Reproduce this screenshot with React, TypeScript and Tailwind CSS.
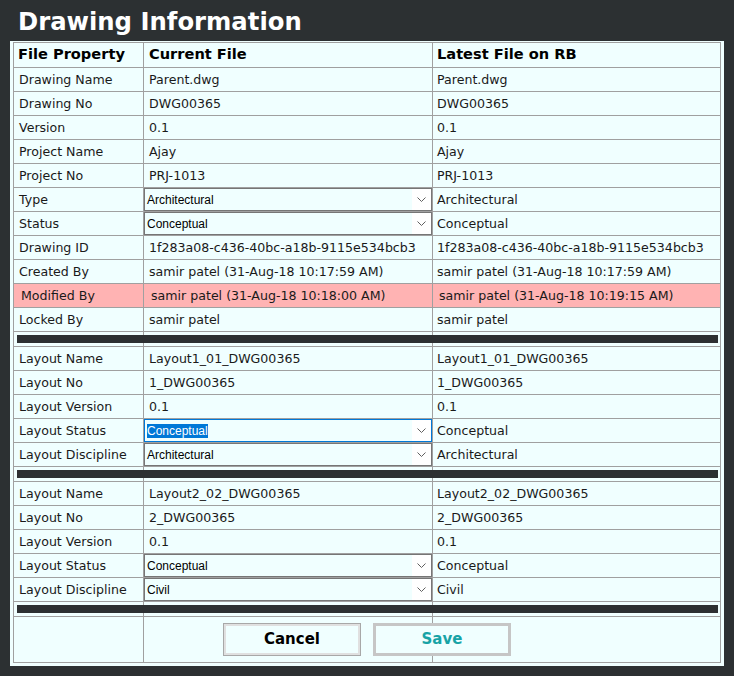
import React from 'react';

type RowData = {
  label: string;
  current: string;
  latest: string;
  select?: boolean;
  focused?: boolean;
  highlight?: boolean;
};

const drawingRows: RowData[] = [
  { label: 'Drawing Name', current: 'Parent.dwg', latest: 'Parent.dwg' },
  { label: 'Drawing No', current: 'DWG00365', latest: 'DWG00365' },
  { label: 'Version', current: '0.1', latest: '0.1' },
  { label: 'Project Name', current: 'Ajay', latest: 'Ajay' },
  { label: 'Project No', current: 'PRJ-1013', latest: 'PRJ-1013' },
  { label: 'Type', current: 'Architectural', latest: 'Architectural', select: true },
  { label: 'Status', current: 'Conceptual', latest: 'Conceptual', select: true },
  { label: 'Drawing ID', current: '1f283a08-c436-40bc-a18b-9115e534bcb3', latest: '1f283a08-c436-40bc-a18b-9115e534bcb3' },
  { label: 'Created By', current: 'samir patel (31-Aug-18 10:17:59 AM)', latest: 'samir patel (31-Aug-18 10:17:59 AM)' },
  { label: 'Modified By', current: 'samir patel (31-Aug-18 10:18:00 AM)', latest: 'samir patel (31-Aug-18 10:19:15 AM)', highlight: true },
  { label: 'Locked By', current: 'samir patel', latest: 'samir patel' },
];

const layouts: RowData[][] = [
  [
    { label: 'Layout Name', current: 'Layout1_01_DWG00365', latest: 'Layout1_01_DWG00365' },
    { label: 'Layout No', current: '1_DWG00365', latest: '1_DWG00365' },
    { label: 'Layout Version', current: '0.1', latest: '0.1' },
    { label: 'Layout Status', current: 'Conceptual', latest: 'Conceptual', select: true, focused: true },
    { label: 'Layout Discipline', current: 'Architectural', latest: 'Architectural', select: true },
  ],
  [
    { label: 'Layout Name', current: 'Layout2_02_DWG00365', latest: 'Layout2_02_DWG00365' },
    { label: 'Layout No', current: '2_DWG00365', latest: '2_DWG00365' },
    { label: 'Layout Version', current: '0.1', latest: '0.1' },
    { label: 'Layout Status', current: 'Conceptual', latest: 'Conceptual', select: true },
    { label: 'Layout Discipline', current: 'Civil', latest: 'Civil', select: true },
  ],
];

const rowGrid = 'grid grid-cols-[130px_289px_288px] border-b border-[#a0a0a0]';
const cell = 'border-r border-[#a0a0a0] flex items-center whitespace-nowrap overflow-hidden';

function FakeSelect({ value, focused }: { value: string; focused?: boolean }) {
  return (
    <div
      className={`flex h-full w-full items-center border font-['Liberation_Sans',Arial,sans-serif] text-[12px] text-black ${
        focused ? 'border-[#0078d7]' : 'border-[#767676]'
      }`}
    >
      <div className="flex-1 pl-[2px]">
        <span className={focused ? 'bg-[#0078d7] text-white' : ''}>{value}</span>
      </div>
      <div className="flex h-full w-[19px] items-center justify-center bg-white">
        <svg width="9" height="5" viewBox="0 0 9 5" fill="none" stroke="#606060" strokeWidth="1">
          <polyline points="0.5,0.5 4.5,4.5 8.5,0.5" />
        </svg>
      </div>
    </div>
  );
}

function Row({ row }: { row: RowData }) {
  const pad = row.highlight ? 'pl-[7px]' : 'pl-[5px]';
  return (
    <div className={`${rowGrid} h-[24px] ${row.highlight ? 'bg-[#ffb3b3]' : ''}`}>
      <div className={`${cell} ${pad} pt-[2px]`}>{row.label}</div>
      <div className={`${cell} ${row.select ? '' : `${pad} pt-[2px]`}`}>
        {row.select ? <FakeSelect value={row.current} focused={row.focused} /> : row.current}
      </div>
      <div className={`${cell} pt-[2px] ${row.highlight ? 'pl-[6px]' : 'pl-[4px]'}`}>{row.latest}</div>
    </div>
  );
}

function Separator() {
  return (
    <div className={`${rowGrid} relative h-[15px]`}>
      <div className={cell}></div>
      <div className={cell}></div>
      <div className={cell}></div>
      {/* dark divider bar drawn across the row */}
      <div className="absolute left-[3px] right-[3px] top-[3px] h-[8px] bg-[#2c3032]"></div>
    </div>
  );
}

export default function App() {
  return (
    <div className="min-h-[676px] bg-[#2c3032] font-['DejaVu_Sans',Verdana,sans-serif] text-[12.6px] text-[#1a1a1a]">
      <div className="px-[18px] pt-[8px] pb-[5px] text-[24.3px] font-bold leading-[28px] text-white">Drawing Information</div>

      <div className="mx-[10px] bg-[#f0ffff] px-[3px] pt-[1px] pb-[3px]">
        <div className="border-l border-t border-[#a0a0a0]">
          {/* Header */}
          <div className={`${rowGrid} h-[25px] text-[14.6px] font-bold text-black`}>
            <div className={`${cell} pl-[4px] pb-[3px]`}>File Property</div>
            <div className={`${cell} pl-[5px] pb-[3px]`}>Current File</div>
            <div className={`${cell} pl-[4px] pb-[3px]`}>Latest File on RB</div>
          </div>

          {drawingRows.map((r) => (
            <Row key={r.label} row={r} />
          ))}

          {layouts.map((group, i) => (
            <React.Fragment key={i}>
              <Separator />
              {group.map((r) => (
                <Row key={r.label} row={r} />
              ))}
            </React.Fragment>
          ))}

          <Separator />

          {/* Buttons */}
          <div className={`${rowGrid} h-[46px]`}>
            <div className={cell}></div>
            <div className={`${cell} overflow-visible`}>
              <div className="relative z-10 ml-[79px] flex gap-[12px] text-[15px] font-bold">
                <button className="flex h-[33px] w-[138px] shrink-0 items-center justify-center border border-[#a8a8a8] bg-[#f0ffff] text-black shadow-[inset_0_0_0_2px_#e0e0e0]">
                  Cancel
                </button>
                <button className="flex h-[33px] w-[138px] shrink-0 items-center justify-center border-[3px] border-[#c6c6c6] bg-[#f0ffff] text-[#17a3a6]">
                  Save
                </button>
              </div>
            </div>
            <div className={cell}></div>
          </div>
        </div>
      </div>
    </div>
  );
}
